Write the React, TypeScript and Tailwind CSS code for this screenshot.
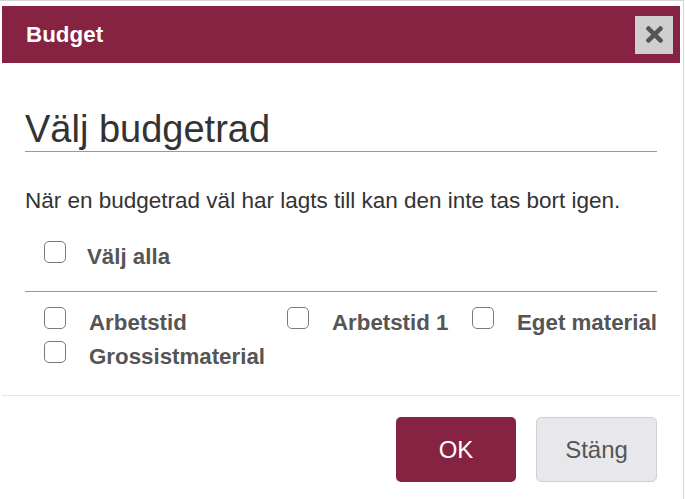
import React from 'react';

const Box = () => (
    <span className="block w-[22px] h-[22px] shrink-0 rounded-[5px] border-[1.5px] border-[#7a7a7a] bg-white" />
);

const Item = ({ label, width }: { label: string, width: string }) => (
    <label className={`flex items-start h-[34px] shrink-0 ${width}`}>
        <Box />
        <span className="ml-[23px] mt-[3px] text-[22.3px] leading-[26px] font-bold text-[#555] whitespace-nowrap">{label}</span>
    </label>
);

const App: React.FC = () => {
    return (
        <div className="w-[685px] h-[499px] bg-white" style={{ fontFamily: '"Liberation Sans", Arial, sans-serif' }}>
            <div className="w-[684px] h-[499px] border-t border-r border-[#d4d4d4] pt-[5px] pl-[2px] pr-[3px]">
                {/* header */}
                <div className="h-[57px] bg-[#872342] flex items-center justify-between pl-[24px] pr-[7px]">
                    <span className="text-white font-bold text-[22.4px]">Budget</span>
                    <button className="w-[38px] h-[38px] bg-[#cfcfcf] flex items-center justify-center">
                        <svg width="17" height="17" viewBox="0 80 352 352" fill="#555">
                            <path d="M242.72 256l100.07-100.07c12.28-12.28 12.28-32.19 0-44.480l-22.24-22.24c-12.28-12.28-32.19-12.28-44.48 0L176 189.28 75.930 89.21c-12.28-12.28-32.19-12.28-44.48 0L9.21 111.45c-12.28 12.28-12.28 32.19 0 44.48L109.28 256 9.21 356.07c-12.28 12.28-12.28 32.19 0 44.48l22.24 22.24c12.28 12.28 32.2 12.28 44.48 0L176 322.72l100.07 100.07c12.28 12.28 32.2 12.28 44.48 0l22.24-22.24c12.28-12.28 12.28-32.19 0-44.48L242.72 256z" />
                        </svg>
                    </button>
                </div>

                {/* body */}
                <div className="px-[23px] pt-[44px]">
                    <h1 className="text-[38px] leading-[44px] text-[#333] border-b border-[#999]">Välj budgetrad</h1>
                    <p className="mt-[36px] text-[22.5px] leading-[26px] text-[#333]">När en budgetrad väl har lagts till kan den inte tas bort igen.</p>

                    <div className="mt-[27px] pl-[19px] flex items-start h-[26px]">
                        <Box />
                        <span className="ml-[21px] mt-[3px] text-[22.3px] leading-[26px] font-bold text-[#555]">Välj alla</span>
                    </div>

                    <div className="mt-[24px] border-t border-[#999] pt-[15px] pl-[19px]">
                        <div className="flex">
                            <Item label="Arbetstid" width="w-[243px]" />
                            <Item label="Arbetstid 1" width="w-[185px]" />
                            <Item label="Eget material" width="" />
                        </div>
                        <div className="flex">
                            <Item label="Grossistmaterial" width="w-[243px]" />
                        </div>
                    </div>
                </div>

                {/* footer */}
                <div className="mt-[20px] border-t border-[#e5e5e5] pt-[21px] px-[23px] flex justify-end gap-[20px]">
                    <button className="w-[120px] h-[65px] rounded-[5px] bg-[#872342] text-white text-[24px]">OK</button>
                    <button className="w-[121px] h-[65px] rounded-[5px] bg-[#e8e8ec] border border-[#cfcfd4] text-[#555] text-[24px]">Stäng</button>
                </div>
            </div>
        </div>
    );
};

export default App;
